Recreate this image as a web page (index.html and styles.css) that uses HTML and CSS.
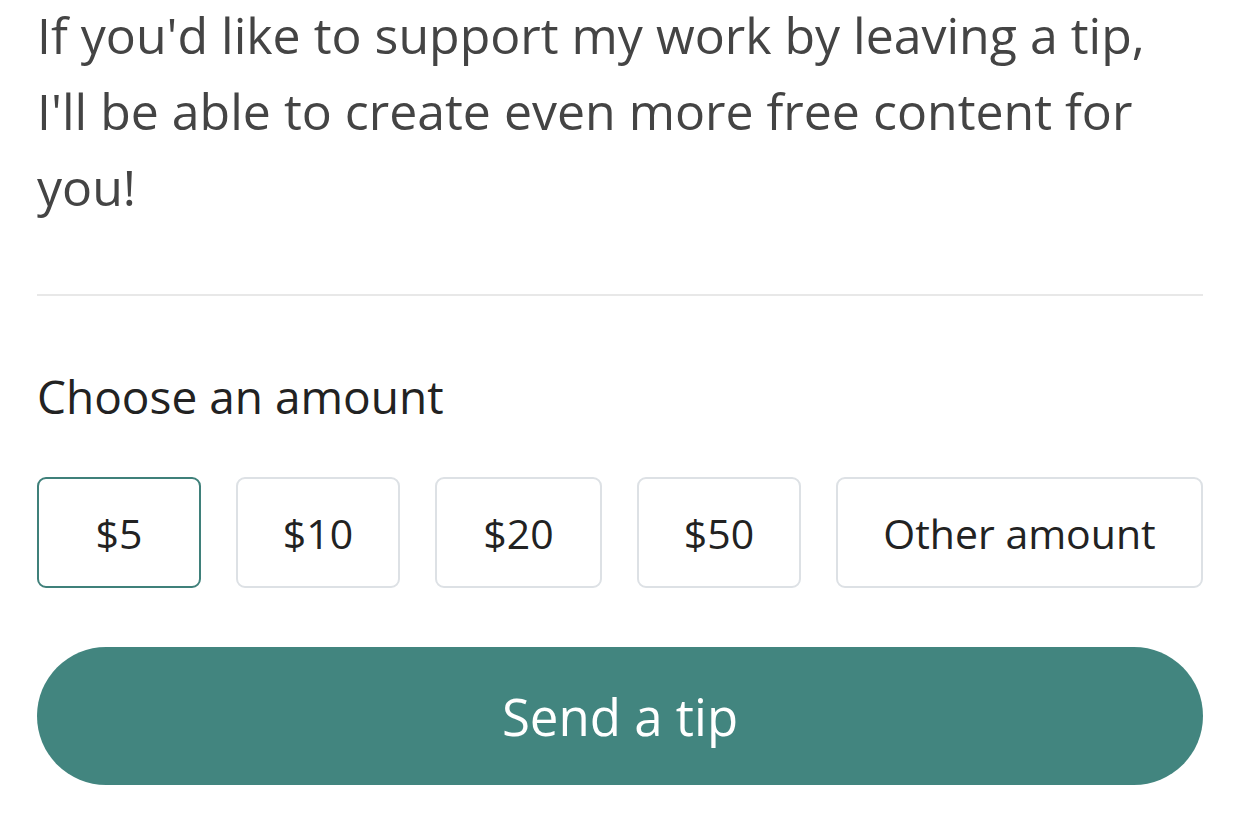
FILE: index.html
```html
<!DOCTYPE html>
<html>
<head>
<meta charset="utf-8">
<link rel="stylesheet" href="styles.css">
</head>
<body>
<div class="tip-card">
  <p class="intro">If you'd like to support my work by leaving a tip, I'll be able to create even more free content for you!</p>
  <hr class="divider">
  <h3 class="label">Choose an amount</h3>
  <div class="amounts">
    <button class="amount selected">$5</button>
    <button class="amount">$10</button>
    <button class="amount wide">$20</button>
    <button class="amount">$50</button>
    <button class="amount other">Other amount</button>
  </div>
  <button class="send">Send a tip</button>
</div>
</body>
</html>
```

FILE: styles.css
```css
html, body {
  margin: 0;
  padding: 0;
  background: #ffffff;
}
.tip-card {
  width: 1166px;
  margin-left: 37px;
  font-family: "Open Sans", "Noto Sans", sans-serif;
}
.intro {
  margin: -3px 0 0 0;
  font-size: 50px;
  line-height: 76px;
  color: #444444;
  width: 1166px;
}
.divider {
  border: 0;
  height: 2px;
  background: #e8e8e8;
  margin: 69px 0 0 0;
}
.label {
  margin: 70px 0 0 0;
  font-size: 46px;
  font-weight: 400;
  color: #222222;
  line-height: 60px;
}
.amounts {
  display: flex;
  gap: 35px;
  margin-top: 51px;
}
.amount {
  height: 111px;
  width: 164px;
  background: #fff;
  border: 2px solid #dde1e5;
  border-radius: 9px;
  font-family: "Open Sans", "Noto Sans", sans-serif;
  font-size: 41px;
  color: #222;
  padding: 0;
}
.amount.wide {
  width: 167px;
}
.amount.selected {
  border-color: #3f807a;
}
.amount.other {
  flex: 1;
}
.send {
  display: block;
  width: 100%;
  height: 138px;
  margin-top: 59px;
  border: 0;
  border-radius: 69px;
  background: #42857f;
  color: #ffffff;
  font-family: "Open Sans", "Noto Sans", sans-serif;
  font-size: 51px;
  padding: 0;
}
```
